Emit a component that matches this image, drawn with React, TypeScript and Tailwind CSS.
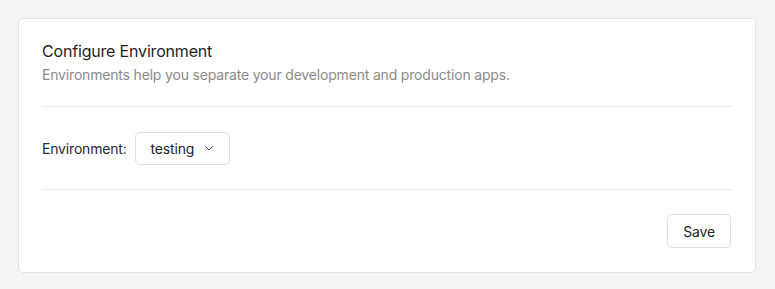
import React from "react";

export default function App() {
  return (
    <div
      className="w-[775px] h-[289px] bg-[#f4f4f4] p-[18px] pb-[16px] pr-[19px]"
      style={{ fontFamily: "Inter, 'Noto Sans', sans-serif" }}
    >
      <div className="h-[255px] bg-white border border-[#e3e3e3] rounded-[5px] px-[23px] pt-[21px] tracking-[-0.18px]">
        <h2 className="text-[16px] leading-[22px] text-[#1f1f1f] font-normal">Configure Environment</h2>
        <p className="text-[14px] leading-[20px] text-[#8a8a8a] mt-[3px]">
          Environments help you separate your development and production apps.
        </p>
        <div className="h-px bg-[#ececec] mt-[21px]" />
        <div className="flex items-center h-[82px] gap-[8px]">
          <span className="text-[14px] text-[#2a2a2a]">Environment:</span>
          <button className="h-[33px] flex items-center gap-[10px] pl-[15px] pr-[15px] border border-[#e0e0e0] rounded-[5px] bg-white text-[14px] text-[#222] tracking-[-0.18px]">
            testing
            <svg width="10" height="10" viewBox="0 0 10 10" fill="none">
              <path d="M1.5 3.5 L5 7 L8.5 3.5" stroke="#444" strokeWidth="1" strokeLinecap="round" strokeLinejoin="round" />
            </svg>
          </button>
        </div>
        <div className="h-px bg-[#ececec]" />
        <div className="flex justify-end pt-[24px] pr-px">
          <button className="h-[34px] px-[15px] border border-[#e0e0e0] rounded-[5px] bg-white text-[14px] text-[#222] tracking-[-0.18px]">
            Save
          </button>
        </div>
      </div>
    </div>
  );
}
